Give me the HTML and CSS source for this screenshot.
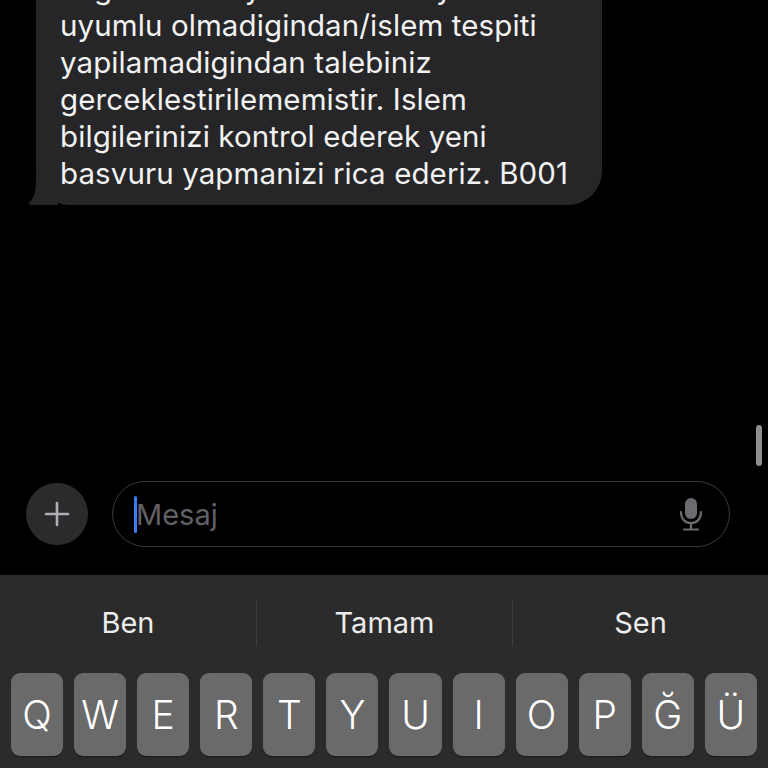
FILE: index.html
```html
<!DOCTYPE html>
<html lang="tr">
<head>
<meta charset="utf-8">
<title>Mesajlar</title>
<link rel="stylesheet" href="styles.css">
</head>
<body>
<div class="screen">
  <div class="messages">
    <div class="bubble-row">
      <div class="bubble">
        <p class="bubble-text">Bilgileriniz kayitlarimizla veya sistemle<br>uyumlu olmadigindan/islem tespiti<br>yapilamadigindan talebiniz<br>gerceklestirilememistir. Islem<br>bilgilerinizi kontrol ederek yeni<br>basvuru yapmanizi rica ederiz. B001</p>
        <svg class="tail" width="30" height="30" viewBox="0 0 30 30"><path d="M8 0 H30 V30 H16 C11 30 5 30.5 0 29 C5 25 8 18 8 8 Z" fill="#262628"/></svg>
      </div>
    </div>
    <div class="scrollbar"></div>
  </div>
  <div class="composer">
    <div class="plus">
      <svg width="26" height="26" viewBox="0 0 26 26"><path d="M13 2 V24 M2 13 H24" stroke="#b0b0b4" stroke-width="2.6" stroke-linecap="round"/></svg>
    </div>
    <div class="input">
      <span class="cursor"></span>
      <span class="placeholder">Mesaj</span>
      <svg class="mic" width="24" height="34" viewBox="0 0 24 34"><rect x="6" y="1" width="12" height="21" rx="6" fill="#6c6c70"/><path d="M2 15 C2 22 6 26 12 26 C18 26 22 22 22 15" fill="none" stroke="#6c6c70" stroke-width="2.2" stroke-linecap="round"/><path d="M12 26 V32 M5 32.5 H19" stroke="#6c6c70" stroke-width="2.2" stroke-linecap="round"/></svg>
    </div>
  </div>
  <div class="keyboard">
    <div class="suggestions">
      <div class="sugg">Ben</div>
      <div class="sugg divided">Tamam</div>
      <div class="sugg divided">Sen</div>
    </div>
    <div class="key-row">
      <div class="key">Q</div><div class="key">W</div><div class="key">E</div><div class="key">R</div><div class="key">T</div><div class="key">Y</div><div class="key">U</div><div class="key">I</div><div class="key">O</div><div class="key">P</div><div class="key">Ğ</div><div class="key">Ü</div>
    </div>
  </div>
</div>
</body>
</html>
```
FILE: styles.css
```css
* { box-sizing: border-box; }
html, body { margin: 0; padding: 0; background: #000; }
body { width: 768px; height: 768px; overflow: hidden; font-family: Inter, "Noto Sans", "Liberation Sans", sans-serif; }
.screen { display: flex; flex-direction: column; height: 768px; }
.messages { position: relative; height: 481px; flex: none; }
.bubble-row { padding-left: 36px; margin-top: -42px; }
.bubble { position: relative; width: 566px; background: #262628; border-radius: 34px; padding: 12px 20px 13px 24px; }
.bubble-text { margin: 0; color: #f2f2f2; font-size: 29.5px; line-height: 37px; letter-spacing: 0.1px; white-space: nowrap; }
.tail { position: absolute; left: -8px; bottom: 0; }
.scrollbar { position: absolute; left: 756px; top: 425px; width: 6px; height: 41px; border-radius: 3px; background: #8e8e90; }
.composer { display: flex; align-items: center; height: 94px; padding: 0 38px 28px 26px; gap: 24px; flex: none; }
.plus { width: 62px; height: 62px; border-radius: 50%; background: #2b2b2d; display: flex; align-items: center; justify-content: center; flex: none; }
.input { flex: 1; height: 66px; border: 1.5px solid #3a3a3c; border-radius: 33px; display: flex; align-items: center; padding: 0 26px 0 21px; }
.cursor { width: 3px; height: 37px; border-radius: 2px; background: #3a7bf7; flex: none; }
.placeholder { flex: 1; color: #616165; font-size: 29px; margin-left: -1px; }
.mic { flex: none; }
.keyboard { flex: 1; background: #2b2b2b; }
.suggestions { display: grid; grid-template-columns: 1fr 1fr 1fr; height: 95px; align-items: center; }
.sugg { color: #ececec; font-size: 29px; text-align: center; height: 46px; line-height: 46px; }
.sugg.divided { border-left: 1.5px solid #3e3e3e; }
.key-row { display: flex; gap: 11px; padding: 3px 11px 0; }
.key { flex: 1; height: 83px; background: #6a6a6a; border-radius: 9px; color: #fff; font-size: 39px; font-weight: 300; display: flex; align-items: center; justify-content: center; padding-bottom: 1px; box-shadow: 0 1.5px 0 #1e1e1e; }
```
